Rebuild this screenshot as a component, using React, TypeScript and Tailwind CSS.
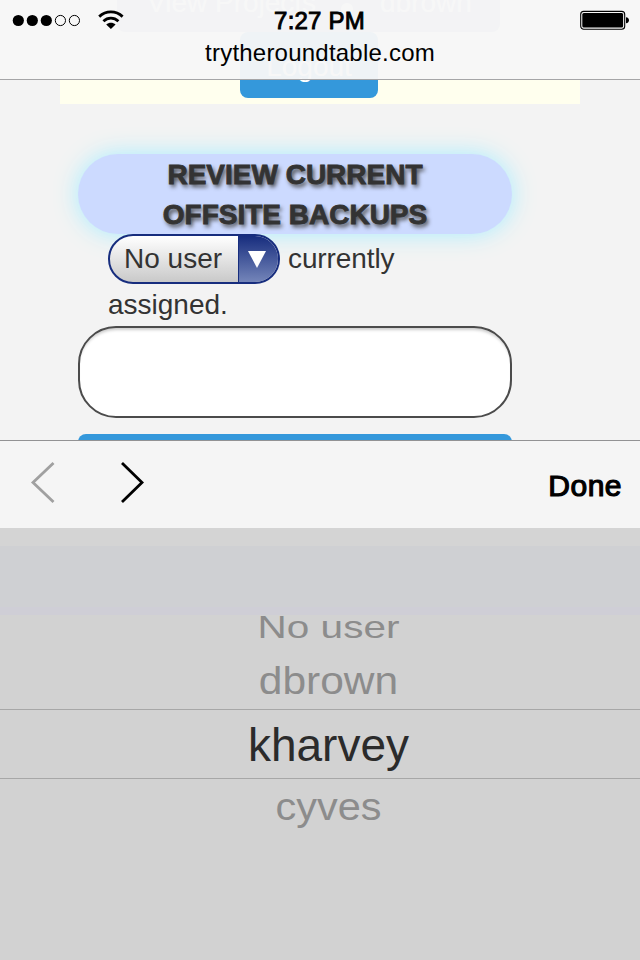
import React from "react";

function StatusBar() {
  return (
    <header className="absolute inset-x-0 top-0 z-10 h-20 border-b border-[#a5a5a7] bg-[#f7f7f7]/96 text-black">
      <div className="flex h-10 items-center justify-between pl-3 pr-[10px]">
        <div className="flex w-[200px] items-center">
          <svg width="70" height="14" viewBox="0 0 70 14">
            <circle cx="6.3" cy="7.5" r="5.6" />
            <circle cx="20.3" cy="7.5" r="5.6" />
            <circle cx="34.3" cy="7.5" r="5.6" />
            <circle cx="48.4" cy="7.5" r="5.1" fill="none" stroke="#000" />
            <circle cx="62.4" cy="7.5" r="5.1" fill="none" stroke="#000" />
          </svg>
          <svg className="ml-4" width="26" height="20" viewBox="0 0 26 20" fill="none" stroke="#000" strokeWidth="2.8">
            <path d="M1.2 6.6C8 0.3 17.8 0.3 24.6 6.6" />
            <path d="M5.4 11.2C9.8 7.2 16 7.2 20.4 11.2" />
            <path d="M8.2 14.6C11 12 14.8 12 17.6 14.6L12.9 19Z" fill="#000" stroke="none" />
          </svg>
        </div>
        <span className="relative top-px text-[24px] leading-none tracking-[0.2px] [-webkit-text-stroke:0.9px_#000]">7:27 PM</span>
        <div className="flex w-[203px] justify-end">
          <svg width="50" height="20" viewBox="0 0 50 20">
            <rect x="0.7" y="1.4" width="44" height="17.8" rx="3" fill="none" stroke="#000" strokeWidth="1.1" />
            <rect x="2.3" y="3" width="40.8" height="14.6" rx="1.5" />
            <path d="M46 7.3c4 0 4 6 0 6Z" />
          </svg>
        </div>
      </div>
      <div className="-mt-px text-center text-[24px] leading-[28px] tracking-[0.22px]">trytheroundtable.com</div>
    </header>
  );
}

function PageContent() {
  return (
    <main className="h-[440px] overflow-hidden bg-[#f3f3f3] text-[28px] text-[#333]">
      <div className="mx-[60px] h-[104px] bg-[#ffffee] text-white">
        <div className="ml-[57px] flex h-8 w-[383px] items-end rounded-b-lg bg-[#8da0c8] pb-[17px] pl-[30px] leading-[24px]">
          <span className="w-[167px] whitespace-nowrap">View Projects</span>
          <span className="mx-[27px] h-3 w-3 rounded-full bg-white" />
          <span>dbrown</span>
        </div>
        <div className="ml-[180px] h-[66px] w-[138px] rounded-lg bg-[#3498db] text-center leading-[70px]">Logout</div>
      </div>
      <div className="px-[78px] pt-[50px]">
        <h1 className="h-20 w-[434px] rounded-[40px] bg-[#ccdaff] pt-px text-center text-[28px] font-bold leading-[40px] text-[#333] shadow-[0_0_24px_#a8edff] [-webkit-text-stroke:0.9px_#333] [text-shadow:2px_3px_4px_#444]">
          REVIEW CURRENT<br />OFFSITE BACKUPS
        </h1>
        <div className="relative ml-[30px] flex h-[50px] items-center">
          <button className="flex h-[50px] w-[172px] overflow-hidden rounded-[25px] border-2 border-[#172d7e] bg-[linear-gradient(#fff,#c9c9c9)]">
            <span className="h-full w-[128px] pl-[14px] text-left leading-[46px]">No user</span>
            <span className="flex h-full flex-1 items-center border-l border-[#172d7e] bg-[linear-gradient(#172d7e,#7485b9)] pl-[9px]">
              <svg width="18" height="17" viewBox="0 0 18 17"><path d="M0 0H18L9 17Z" fill="#fff" /></svg>
            </span>
          </button>
          <span className="ml-2 tracking-[-0.1px]">currently</span>
        </div>
        <p className="ml-[30px] h-[42px] leading-[42px]">assigned.</p>
        <div className="h-[92px] w-[434px] rounded-[38px] border-2 border-[#4b4b4b] bg-white shadow-[inset_0_4px_3px_-2px_#ccc]" />
        <div className="mt-4 h-12 w-[434px] rounded-lg bg-[#3498db]" />
      </div>
    </main>
  );
}

function Toolbar() {
  return (
    <nav className="flex h-[88px] items-center justify-between border-t border-[#929294] bg-[#f5f5f5] pl-[30px] pr-[18px]">
      <svg className="-mt-[4px]" width="116" height="44" viewBox="0 0 116 44" fill="none" strokeWidth="2.8">
        <path d="M23.5 2L3 21.5L23.5 41" stroke="#a0a0a0" />
        <path d="M92 2L112 21.5L92 41" stroke="#000" />
      </svg>
      <span className="mt-[3px] text-[30px] leading-none tracking-[0.5px] text-black [-webkit-text-stroke:1.2px_#000]">Done</span>
    </nav>
  );
}

function Picker() {
  return (
    <section className="h-[432px] bg-[#d2d2d2] pl-[17px] text-center text-[#8c8c8c]">
      <div className="-ml-[17px] h-[18px] bg-[#d4d4d4]" />
      <div className="-ml-[17px] h-[69px] border-b-8 border-[#cfced6] bg-[#cfd0d3]" />
      <div className="-mt-[14px] h-[52px] origin-center scale-y-[0.77] text-[40.5px] leading-[52px]">No user</div>
      <div className="mt-px h-[54px] scale-y-[0.91] text-[42.5px] leading-[54px]">dbrown</div>
      <div className="-ml-[17px] mt-px h-[70px] border-y border-[#a7a7a7] pl-[17px] text-[46px] leading-[70px] text-[#2b2b2b]">kharvey</div>
      <div className="h-[54px] scale-y-[0.94] pt-px text-[41.5px] leading-[54px]">cyves</div>
    </section>
  );
}

export default function App() {
  return (
    <div className="relative h-[960px] w-[640px] overflow-hidden font-['Liberation_Sans',Arial,sans-serif]">
      <StatusBar />
      <PageContent />
      <Toolbar />
      <Picker />
    </div>
  );
}
